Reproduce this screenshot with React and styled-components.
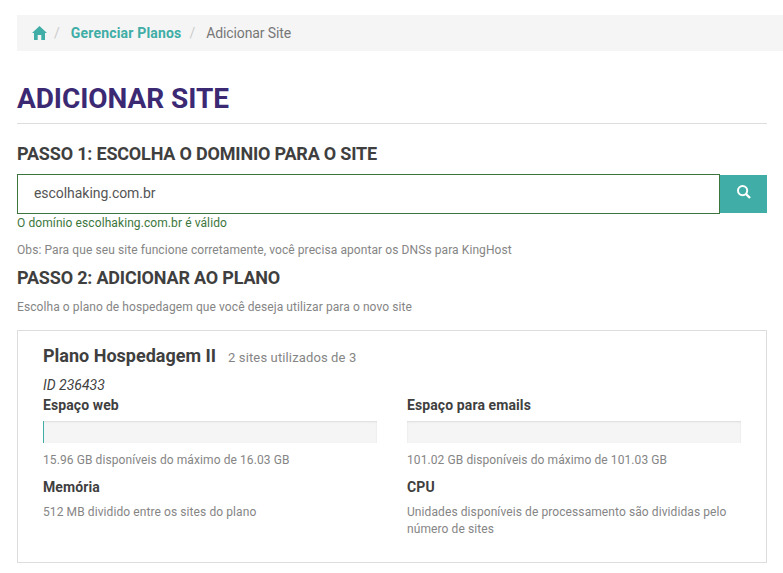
import React from "react";
import styled, { createGlobalStyle } from "styled-components";

const Global = createGlobalStyle`
  html, body { margin: 0; padding: 0; background: #fff; }
  body { font-family: Roboto, "Liberation Sans", sans-serif; color: #3f3f3f; overflow: hidden; }
  * { box-sizing: border-box; }
`;

const Page = styled.div`
  width: 783px;
  height: 573px;
  padding: 15px 16px 0 17px;
  overflow: hidden;
`;

const Breadcrumb = styled.nav`
  display: flex;
  align-items: center;
  height: 36px;
  margin-right: -16px;
  padding: 0 15px;
  background: #f5f5f5;
  font-size: 14px;
`;

const CrumbLink = styled.a`
  color: #40ada6;
  font-weight: 700;
  letter-spacing: 0.18px;
`;

const CrumbCurrent = styled.span`
  color: #777;
  letter-spacing: -0.12px;
`;

const Separator = styled.span`
  color: #ccc;
  padding: 0 11px 0 7px;
  &:nth-of-type(2) { padding: 0 11px 0 8px; }
`;

const Title = styled.h1`
  margin: 30px 0 0;
  padding-top: 1px;
  height: 43px;
  border-bottom: 1px solid #ddd;
  color: #3b2a73;
  font-size: 28px;
  line-height: 33px;
  font-weight: 700;
  letter-spacing: -0.07px;
`;

const StepTitle = styled.h2`
  margin: ${p => p.$top}px 0 0;
  color: #3f3f3f;
  font-size: 18px;
  line-height: 20px;
  font-weight: 700;
  letter-spacing: -0.19px;
`;

const SearchRow = styled.div`
  display: flex;
  margin-top: 10px;
`;

const DomainInput = styled.div`
  flex: 1;
  height: 40px;
  padding: 0 16px;
  border: 1px solid #3c763d;
  font-size: 14px;
  line-height: 36px;
  color: #555;
  letter-spacing: -0.05px;
`;

const SearchButton = styled.button`
  width: 47px;
  height: 38px;
  border: 0;
  padding: 0 0 4px;
  background: #40ada6;
  color: #fff;
  display: flex;
  align-items: center;
  justify-content: center;
  margin-top: 1px;
`;

const Valid = styled.div`
  margin-top: 1px;
  color: #3c763d;
  font-size: 12px;
  line-height: 17px;
  letter-spacing: 0.09px;
`;

const Help = styled.p`
  margin: ${p => p.$top}px 0 0;
  color: #858585;
  font-size: 12px;
  line-height: 17px;
  letter-spacing: 0.085px;
`;

const PlanCard = styled.section`
  margin-top: 14px;
  height: 233px;
  padding: 13px 25px 0;
  border: 1px solid #ddd;
`;

const PlanHead = styled.div`
  display: flex;
  align-items: baseline;
  gap: 12px;
`;

const PlanName = styled.h3`
  margin: 0;
  color: #3f3f3f;
  font-size: 18px;
  line-height: 24px;
  font-weight: 700;
`;

const PlanUsage = styled.span`
  color: #858585;
  font-size: 13px;
  letter-spacing: 0.13px;
`;

const PlanId = styled.div`
  margin-top: 9px;
  color: #3f3f3f;
  font-size: 14px;
  font-style: italic;
  line-height: 16px;
`;

const Grid = styled.div`
  display: grid;
  grid-template-columns: 334px 334px;
  column-gap: 30px;
  margin-top: 2px;
`;

const Item = styled.div``;

const ItemTitle = styled.h4`
  margin: ${p => p.$top || 0}px 0 0;
  color: #3f3f3f;
  font-size: 14px;
  line-height: 20px;
  font-weight: 700;
  letter-spacing: 0.1px;
`;

const Bar = styled.div`
  height: 22px;
  margin-top: 6px;
  background: #f5f5f5;
  box-shadow: inset 0 1px 2px rgba(0, 0, 0, 0.1);
`;

const BarFill = styled.div`
  height: 100%;
  background: #40ada6;
`;

const Note = styled.p`
  margin: ${p => p.$top}px 0 0;
  color: #858585;
  font-size: 12px;
  line-height: 17px;
  letter-spacing: 0.09px;
`;

const Home = () => (
  <svg width="15" height="14" viewBox="0 0 15 14" fill="#40ada6">
    <path d="M7.5 0 L15 7 L13 7 L13 14 L9.3 14 L9.3 9 L5.7 9 L5.7 14 L2 14 L2 7 L0 7 Z" />
  </svg>
);

const SearchIcon = () => (
  <svg width="14" height="14" viewBox="0 0 14 14" fill="none" stroke="#fff">
    <circle cx="5.6" cy="5.6" r="4.6" strokeWidth="2" />
    <path d="M9 9 L13 13" strokeWidth="2.4" />
  </svg>
);

export default function App() {
  return (
    <Page>
      <Global />
      <Breadcrumb>
        <Home />
        <Separator>/</Separator>
        <CrumbLink>Gerenciar Planos</CrumbLink>
        <Separator>/</Separator>
        <CrumbCurrent>Adicionar Site</CrumbCurrent>
      </Breadcrumb>
      <Title>ADICIONAR SITE</Title>
      <StepTitle $top={20}>PASSO 1: ESCOLHA O DOMINIO PARA O SITE</StepTitle>
      <SearchRow>
        <DomainInput>escolhaking.com.br</DomainInput>
        <SearchButton aria-label="Buscar"><SearchIcon /></SearchButton>
      </SearchRow>
      <Valid>O domínio escolhaking.com.br é válido</Valid>
      <Help $top={10}>Obs: Para que seu site funcione corretamente, você precisa apontar os DNSs para KingHost</Help>
      <StepTitle $top={9}>PASSO 2: ADICIONAR AO PLANO</StepTitle>
      <Help $top={11}>Escolha o plano de hospedagem que você deseja utilizar para o novo site</Help>
      <PlanCard>
        <PlanHead>
          <PlanName>Plano Hospedagem II</PlanName>
          <PlanUsage>2 sites utilizados de 3</PlanUsage>
        </PlanHead>
        <PlanId>ID 236433</PlanId>
        <Grid>
          <Item>
            <ItemTitle>Espaço web</ItemTitle>
            <Bar><BarFill style={{ width: "1px" }} /></Bar>
            <Note $top={9}>15.96 GB disponíveis do máximo de 16.03 GB</Note>
          </Item>
          <Item>
            <ItemTitle>Espaço para emails</ItemTitle>
            <Bar />
            <Note $top={9}>101.02 GB disponíveis do máximo de 101.03 GB</Note>
          </Item>
          <Item>
            <ItemTitle $top={8}>Memória</ItemTitle>
            <Note $top={7}>512 MB dividido entre os sites do plano</Note>
          </Item>
          <Item>
            <ItemTitle $top={8}>CPU</ItemTitle>
            <Note $top={7}>Unidades disponíveis de processamento são divididas pelo número de sites</Note>
          </Item>
        </Grid>
      </PlanCard>
    </Page>
  );
}
